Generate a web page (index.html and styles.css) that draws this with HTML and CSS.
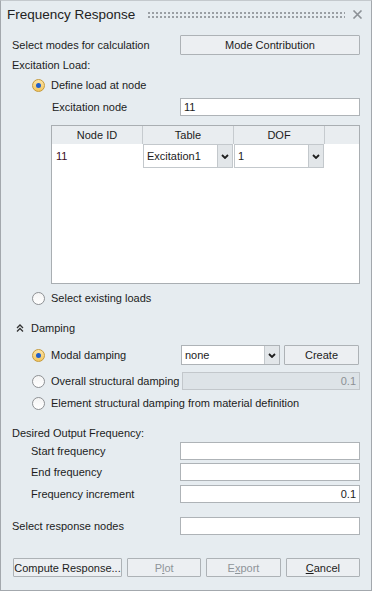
FILE: index.html
```html
<!DOCTYPE html>
<html lang="en">
<head>
    <meta charset="UTF-8">
    <meta name="viewport" content="width=device-width, initial-scale=1.0">
    <title>Frequency Response</title>
    <link rel="stylesheet" href="styles.css">
</head>
<body>
    <div class="panel">
        <div class="titlebar">
            <span class="title">Frequency Response</span>
            <span class="grip"></span>
            <svg class="close" width="11" height="9" viewBox="0 0 11 9">
                <path d="M1.5 0.5 L9.5 8.5 M9.5 0.5 L1.5 8.5" stroke="#8c9196" stroke-width="1.6" fill="none"/>
            </svg>
        </div>

        <div class="content">
            <div class="row row-modes">
                <span class="label">Select modes for calculation</span>
                <button class="btn wide">Mode Contribution</button>
            </div>

            <div class="row row-text">Excitation Load:</div>

            <label class="row row-text radio-row indent">
                <span class="radio checked"></span>Define load at node
            </label>

            <div class="row row-field indent-2">
                <span class="label">Excitation node</span>
                <div class="field">11</div>
            </div>

            <div class="grid-box">
                <div class="grid-head">
                    <div class="hcell">Node ID</div>
                    <div class="hcell">Table</div>
                    <div class="hcell">DOF</div>
                </div>
                <div class="grid-row">
                    <div class="cell node">11</div>
                    <div class="combo cell-combo">
                        <span class="combo-text">Excitation1</span>
                        <span class="combo-btn"><svg width="8" height="5" viewBox="0 0 8 5"><path d="M1 1 L4 4 L7 1" stroke="#1e1e1e" stroke-width="1.8" fill="none"/></svg></span>
                    </div>
                    <div class="combo cell-combo">
                        <span class="combo-text">1</span>
                        <span class="combo-btn"><svg width="8" height="5" viewBox="0 0 8 5"><path d="M1 1 L4 4 L7 1" stroke="#1e1e1e" stroke-width="1.8" fill="none"/></svg></span>
                    </div>
                </div>
            </div>

            <label class="row row-text radio-row indent row-existing">
                <span class="radio"></span>Select existing loads
            </label>

            <div class="row row-text row-damping">
                <svg class="chev" width="8" height="8" viewBox="0 0 8 8">
                    <path d="M1 4 L4 1 L7 4 M1 7.5 L4 4.5 L7 7.5" stroke="#333" stroke-width="1.3" fill="none"/>
                </svg>
                Damping
            </div>

            <div class="row row-modal">
                <label class="label radio-row indent">
                    <span class="radio checked"></span>Modal damping
                </label>
                <div class="modal-controls">
                    <div class="combo modal-combo">
                        <span class="combo-text">none</span>
                        <span class="combo-btn"><svg width="8" height="5" viewBox="0 0 8 5"><path d="M1 1 L4 4 L7 1" stroke="#1e1e1e" stroke-width="1.8" fill="none"/></svg></span>
                    </div>
                    <button class="btn create">Create</button>
                </div>
            </div>

            <div class="row row-overall">
                <label class="label radio-row indent">
                    <span class="radio"></span>Overall structural damping
                </label>
                <div class="field disabled">0.1</div>
            </div>

            <label class="row row-text radio-row indent row-element">
                <span class="radio"></span>Element structural damping from material definition
            </label>

            <div class="row row-desired">Desired Output Frequency:</div>

            <div class="row row-field row-start">
                <span class="label sub">Start frequency</span>
                <div class="field"></div>
            </div>
            <div class="row row-field row-end">
                <span class="label sub">End frequency</span>
                <div class="field"></div>
            </div>
            <div class="row row-field row-incr">
                <span class="label sub">Frequency increment</span>
                <div class="field num">0.1</div>
            </div>

            <div class="row row-field row-nodes">
                <span class="label">Select response nodes</span>
                <div class="field"></div>
            </div>

            <div class="actions">
                <button class="btn compute">Compute Response...</button>
                <button class="btn off" disabled>P<u>l</u>ot</button>
                <button class="btn off" disabled>E<u>x</u>port</button>
                <button class="btn"><u>C</u>ancel</button>
            </div>
        </div>
    </div>
</body>
</html>
```

FILE: styles.css
```css
body {
    margin: 0;
    padding: 0;
    font-family: "Liberation Sans", Arial, sans-serif;
    font-size: 11px;
    color: #1c1c1c;
    background-color: #e6ecf0;
    white-space: nowrap;
}

.panel {
    width: 372px;
    height: 591px;
    box-sizing: border-box;
    border: 1px solid #a3a8ad;
    border-top-color: #c4c9cd;
    background-color: #e6ecf0;
}

.titlebar {
    height: 27px;
    display: flex;
    align-items: center;
    padding: 0 5px 0 6px;
}

.title {
    font-size: 13.5px;
    color: #222;
}

.grip {
    flex: 1;
    height: 7px;
    margin: 1px 7px 0 13px;
    background-image: radial-gradient(circle, #9a9fa4 0.8px, transparent 1.1px);
    background-size: 4px 4px;
    background-position: -1px -1px;
}

.close {
    margin-right: 3px;
}

.content {
    padding: 0 11px 0 11px;
}

.row {
    display: flex;
    align-items: center;
}

.label {
    flex: 1;
}

.row-modes {
    margin-top: 7px;
    height: 20px;
}

.row-text {
    height: 20px;
}

.indent {
    padding-left: 20px;
}

.indent-2 {
    padding-left: 40px;
}

.radio-row {
    display: flex;
    align-items: center;
}

.radio {
    width: 11px;
    height: 11px;
    border-radius: 50%;
    border: 1px solid #8e9194;
    background: linear-gradient(#f4f4f4, #ffffff);
    margin-right: 6px;
    box-sizing: content-box;
    position: relative;
    flex: none;
}

.radio.checked {
    border-color: #c69a3a;
    background: linear-gradient(#fbe3a4, #f3c65f);
}

.radio.checked::after {
    content: "";
    position: absolute;
    left: 3px;
    top: 3px;
    width: 5px;
    height: 5px;
    border-radius: 50%;
    background-color: #1f5fcb;
}

.btn {
    font-family: inherit;
    font-size: 11px;
    color: #1c1c1c;
    height: 20px;
    padding: 0;
    background-color: #eceff2;
    border: 1px solid #adb2b6;
    border-radius: 1px;
    white-space: nowrap;
}

.btn.wide {
    width: 180px;
}

.field {
    width: 180px;
    height: 18px;
    box-sizing: border-box;
    background-color: #fff;
    border: 1px solid #aeb3b7;
    padding: 0 3px;
    line-height: 16px;
}

.field.num {
    text-align: right;
    padding-right: 3px;
}

.field.disabled {
    width: 178px;
    background-color: #dde3e7;
    border-color: #c2c7cb;
    color: #8c9195;
    text-align: right;
    padding-right: 3px;
}

.row-field {
    height: 18px;
    margin-top: 3px;
}

.grid-box {
    margin: 9px 0 0 39px;
    height: 159px;
    box-sizing: border-box;
    border: 1px solid #a9aeb2;
    background-color: #fff;
}

.grid-head {
    display: flex;
    height: 18px;
    background-color: #e9edf0;
}

.hcell {
    width: 91px;
    box-sizing: border-box;
    border-right: 1px solid #c6cbcf;
    text-align: center;
    line-height: 18px;
}

.grid-row {
    display: flex;
    height: 24px;
    width: 273px;
    background-color: #fff;
}

.cell.node {
    width: 91px;
    padding: 2px 4px 0;
    box-sizing: border-box;
    line-height: 20px;
    color: #3a0d1e;
}

.combo {
    display: flex;
    box-sizing: border-box;
    border: 1px solid #b9bec2;
    background-color: #fff;
}

.cell-combo {
    width: 90px;
    height: 24px;
    margin-right: 1px;
    border-color: #c3c8cc;
}

.combo-text {
    flex: 1;
    padding-left: 3px;
    display: flex;
    align-items: center;
}

.combo-btn {
    width: 14px;
    background-color: #e2e6e9;
    border-left: 1px solid #c3c8cc;
    display: flex;
    align-items: center;
    justify-content: center;
}

.row-existing {
    margin-top: 4px;
}

.row-damping {
    margin-top: 10px;
    padding-left: 4px;
}

.chev {
    margin-right: 7px;
}

.row-modal {
    margin-top: 7px;
    height: 20px;
}

.modal-controls {
    display: flex;
    width: 179px;
    margin-right: 1px;
}

.modal-combo {
    width: 99px;
    height: 20px;
    margin-left: 1px;
    border-color: #aeb3b7;
}

.btn.create {
    width: 75px;
    margin-left: 4px;
}

.row-overall {
    margin-top: 7px;
    height: 18px;
}

.row-element {
    margin-top: 3px;
}

.row-desired {
    margin-top: 10px;
    height: 19px;
}

.row-start {
    margin-top: 0;
}

.row-incr {
    margin-top: 4px;
}

.label.sub {
    padding-left: 19px;
}

.row-nodes {
    margin-top: 14px;
}

.actions {
    display: flex;
    gap: 5px;
    margin: 23px 0 0 1px;
}

.actions .btn {
    width: 75px;
    height: 19px;
}

.actions .btn.compute {
    width: 110px;
}

.btn.off {
    color: #8f959a;
}
```
